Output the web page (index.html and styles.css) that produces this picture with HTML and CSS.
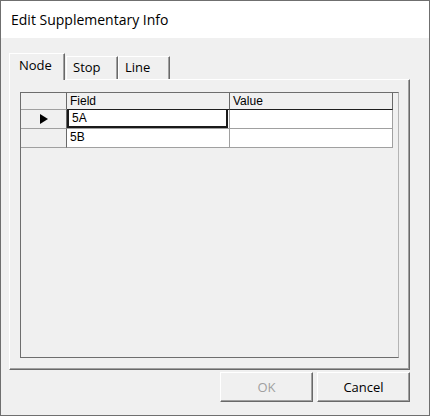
FILE: index.html
```html
<!DOCTYPE html>
<html>
<head>
<meta charset="utf-8">
<link rel="stylesheet" href="styles.css">
</head>
<body>
<div class="window">
  <div class="titlebar"><span class="title">Edit Supplementary Info</span></div>
  <div class="content">
    <div class="tabs">
      <div class="tab active">Node</div>
      <div class="tab">Stop</div>
      <div class="tab">Line</div>
    </div>
    <div class="panel">
      <div class="grid">
        <div class="gridtable">
          <div class="cell corner"></div>
          <div class="cell colhdr">Field</div>
          <div class="cell colhdr last">Value</div>

          <div class="cell rowhdr"><span class="arrow"></span></div>
          <div class="cell data current"><span class="focus">5A</span></div>
          <div class="cell data"></div>

          <div class="cell rowhdr"></div>
          <div class="cell data">5B</div>
          <div class="cell data"></div>
        </div>
      </div>
    </div>
    <div class="buttons">
      <div class="btn disabled">OK</div>
      <div class="btn">Cancel</div>
    </div>
  </div>
</div>
</body>
</html>
```

FILE: styles.css
```css
html, body {
  margin: 0;
  padding: 0;
  background: #f0f0f0;
}
.window {
  width: 430px;
  height: 416px;
  box-sizing: border-box;
  border: 1px solid #6f6f6f;
  background: #f0f0f0;
  display: flex;
  flex-direction: column;
}
.titlebar {
  height: 37px;
  background: #ffffff;
  padding-left: 10px;
  display: flex;
  align-items: center;
  font-family: "Open Sans", "Noto Sans", sans-serif;
  font-size: 14px;
  color: #000;
}
.content {
  flex: 1;
  display: flex;
  flex-direction: column;
  padding: 15px 19px 0 8px;
}
.tabs {
  display: flex;
  align-items: flex-end;
  height: 27px;
  margin-bottom: -1px;
  font-family: "Open Sans", "Noto Sans", sans-serif;
  font-size: 13px;
  position: relative;
  z-index: 2;
}
.tab {
  box-sizing: border-box;
  height: 23px;
  width: 51px;
  border-top: 1px solid #ffffff;
  border-left: 1px solid #ffffff;
  border-right: 1px solid #696969;
  box-shadow: inset -1px 0 0 #a0a0a0;
  background: #f0f0f0;
  padding: 1px 0 0 6px;
  line-height: 19px;
  color: #000;
}
.tab.active {
  height: 27px;
  width: 56px;
  padding: 2px 0 0 9px;
  margin-right: 1px;
}
.tab + .tab {
  width: 52px;
  margin-bottom: 1px;
}
.panel {
  box-sizing: border-box;
  height: 291px;
  border-top: 1px solid #ffffff;
  border-left: 1px solid #ffffff;
  border-right: 1px solid #696969;
  border-bottom: 1px solid #696969;
  box-shadow: inset -1px -1px 0 #a0a0a0;
  padding: 12px 10px 11px 10px;
  display: flex;
}
.grid {
  flex: 1;
  box-sizing: border-box;
  border-top: 1px solid #6d6d6d;
  border-left: 1px solid #6d6d6d;
  border-right: 1px solid #b4b4b4;
  border-bottom: 1px solid #6d6d6d;
  background: #f0f0f0;
}
.gridtable {
  display: grid;
  grid-template-columns: 46px 163px 163px;
  grid-template-rows: 17px 19px 19px;
  font-family: "Liberation Sans", Arial, sans-serif;
  font-size: 12px;
  color: #000;
}
.cell {
  box-sizing: border-box;
  border-right: 1px solid #a0a0a0;
  border-bottom: 1px solid #a0a0a0;
  padding-left: 3px;
  line-height: 17px;
  white-space: nowrap;
}
.corner {
  background: #f0f0f0;
  border-right: 1px solid #696969;
  border-bottom: 1px solid #a0a0a0;
}
.colhdr {
  background: #f0f0f0;
  border-right: 1px solid #696969;
  border-bottom: 1px solid #1e1e1e;
  line-height: 16px;
}
.rowhdr {
  background: #f0f0f0;
  border-right: 1px solid #696969;
  display: flex;
  align-items: center;
  padding-left: 19px;
}
.data {
  background: #ffffff;
}
.current {
  padding: 0;
}
.focus {
  display: block;
  box-sizing: border-box;
  height: 18px;
  width: 161px;
  border: 2px solid #1a1a1a;
  border-top: none;
  padding-left: 3px;
  line-height: 16px;
}
.arrow {
  width: 0;
  height: 0;
  border-top: 5px solid transparent;
  border-bottom: 5px solid transparent;
  border-left: 8px solid #000;
}
.buttons {
  display: flex;
  justify-content: flex-end;
  gap: 4px;
  margin-top: 2px;
}
.btn {
  box-sizing: border-box;
  width: 93px;
  height: 30px;
  border-top: 1px solid #ffffff;
  border-left: 1px solid #ffffff;
  border-right: 1px solid #696969;
  border-bottom: 1px solid #696969;
  box-shadow: inset -1px -1px 0 #a0a0a0;
  background: #f0f0f0;
  display: flex;
  align-items: center;
  justify-content: center;
  font-family: "Open Sans", "Noto Sans", sans-serif;
  font-size: 13px;
  color: #000;
}
.btn.disabled {
  color: #a0a0a0;
}
```
